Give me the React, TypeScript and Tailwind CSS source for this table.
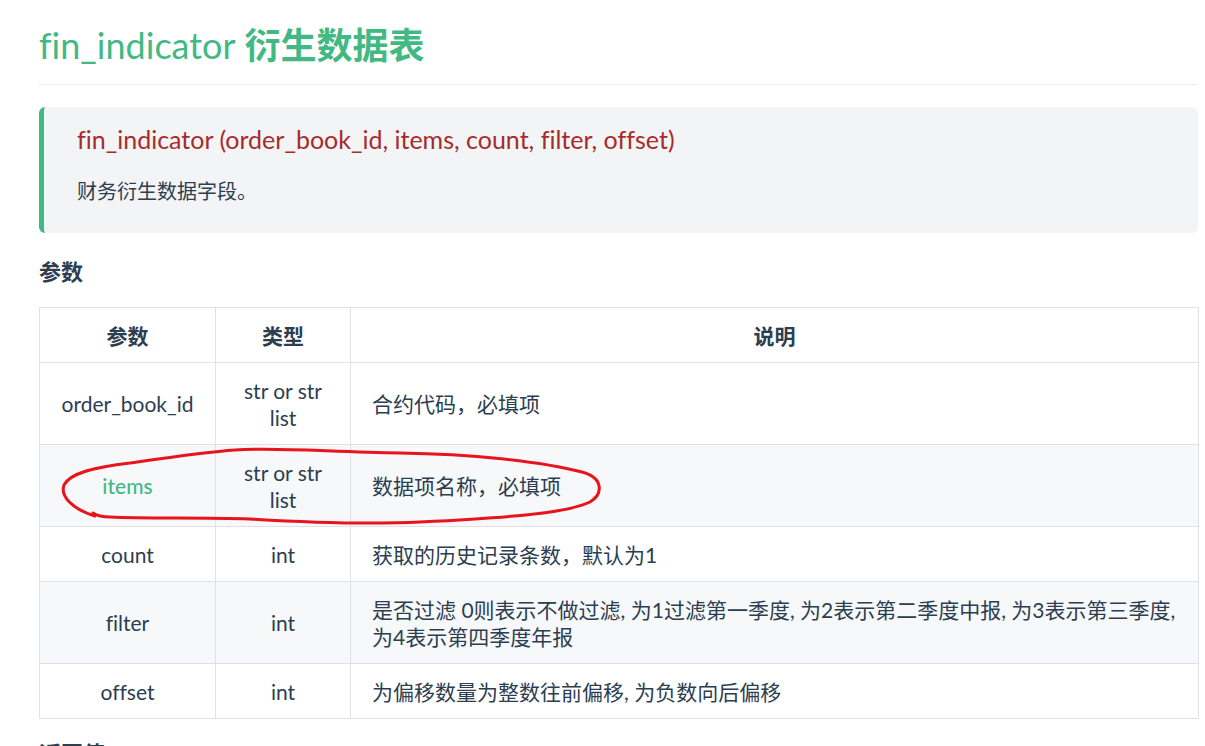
import React from "react"

type Row = {
    name: string
    type: string[]
    desc: string[]
    highlight?: boolean
}

const rows: Row[] = [
    { name: "order_book_id", type: ["str or str", "list"], desc: ["合约代码，必填项"] },
    { name: "items", type: ["str or str", "list"], desc: ["数据项名称，必填项"], highlight: true },
    { name: "count", type: ["int"], desc: ["获取的历史记录条数，默认为1"] },
    {
        name: "filter",
        type: ["int"],
        desc: [
            "是否过滤 0则表示不做过滤, 为1过滤第一季度, 为2表示第二季度中报, 为3表示第三季度,",
            "为4表示第四季度年报",
        ],
    },
    { name: "offset", type: ["int"], desc: ["为偏移数量为整数往前偏移, 为负数向后偏移"] },
]

const font = "font-['Lato','Noto_Sans_CJK_SC',sans-serif] [font-variant-ligatures:none]"

const Ellipse = () => (
    <svg
        className="absolute left-0 top-0 pointer-events-none"
        width="1205"
        height="746"
        viewBox="0 0 1205 746"
    >
        <path
            d="M95 516 C72 509 60 496 64 485 C70 473 95 467 130 463 C165 458 205 452 235 450 C275 447 330 452 400 453 C470 454 540 461 582 472 C604 478 603 494 590 502 C565 514 500 518 420 522 C360 525 300 522 250 519 C200 517 150 519 110 517 C100 517 96 515 93 513"
            fill="none"
            stroke="#e8141b"
            strokeWidth="3"
            strokeLinecap="round"
        />
    </svg>
)

const App = () => {
    return (
        <div className={`relative w-[1205px] h-[746px] overflow-hidden bg-white text-[#2c3e50] ${font}`}>
            <div className="pl-[39px] pr-[7px] pt-[20px]">
                <h1 className="text-[36px] leading-[50px] font-semibold text-[#42b983] pb-[14px] border-b border-[#eaecef]">
                    <span className="font-normal">fin_indicator</span> 衍生数据表
                </h1>
                <div className="mt-[22px] h-[126px] rounded-[6px] bg-[#f3f4f5] border-l-[5px] border-[#42b983] pl-[33px] pt-[13px]">
                    <p className="text-[25px] leading-[38px] text-[#a82b2b]">
                        fin_indicator (order_book_id, items, count, filter, offset)
                    </p>
                    <p className="mt-[19px] text-[20px] leading-[28px]">财务衍生数据字段。</p>
                </div>
                <h3 className="mt-[24px] text-[22px] leading-[30px] font-bold">参数</h3>
                <table className="mt-[20px] w-[1160px] border-collapse text-[21px]">
                    <thead>
                        <tr>
                            <th className="w-[176px] border border-[#dfe2e5] py-[13.5px] leading-[27px] font-bold">参数</th>
                            <th className="w-[135px] border border-[#dfe2e5] py-[13.5px] leading-[27px] font-bold">类型</th>
                            <th className="border border-[#dfe2e5] py-[13.5px] leading-[27px] font-bold">说明</th>
                        </tr>
                    </thead>
                    <tbody>
                        {rows.map((r, i) => (
                            <tr key={r.name} className={i % 2 === 1 ? "bg-[#f6f8fa]" : "bg-white"}>
                                <td
                                    className={`border border-[#dfe2e5] py-[13.5px] leading-[27px] text-center ${r.highlight ? "text-[#42b983] font-medium" : ""}`}
                                >
                                    {r.name}
                                </td>
                                <td className="border border-[#dfe2e5] py-[13.5px] leading-[27px] text-center">
                                    {r.type.map((t) => (
                                        <div key={t}>{t}</div>
                                    ))}
                                </td>
                                <td className="border border-[#dfe2e5] py-[13.5px] px-[21px] leading-[27px]">
                                    {r.desc.map((d) => (
                                        <div key={d}>{d}</div>
                                    ))}
                                </td>
                            </tr>
                        ))}
                    </tbody>
                </table>
                <h3 className="mt-[20px] text-[22px] leading-[30px] font-bold">返回值</h3>
            </div>
            <Ellipse />
        </div>
    )
}

export default App
